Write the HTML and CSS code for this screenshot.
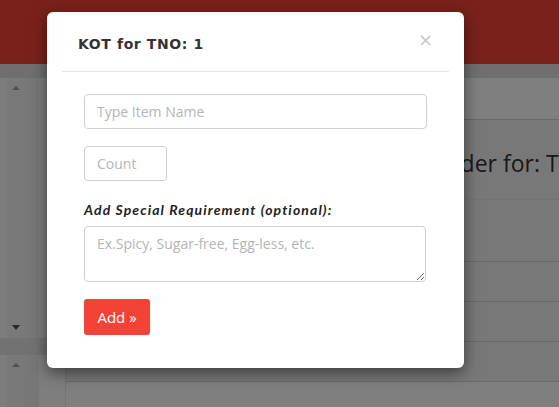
FILE: index.html
```html
<!DOCTYPE html>
<html>
<head>
<meta charset="utf-8">
<link rel="stylesheet" href="styles.css">
</head>
<body>
<div class="page">
  <header class="topbar"></header>
  <div class="subbar"></div>
  <div class="layout">
    <aside class="sidebar">
      <div class="listbox first">
        <div class="edge"></div>
        <div class="scroll"><span class="arr up"></span><span class="arr down"></span></div>
        <div class="pane"></div>
      </div>
      <div class="gapband"></div>
      <div class="listbox second">
        <div class="edge"></div>
        <div class="scroll"><span class="arr up"></span></div>
        <div class="pane"></div>
      </div>
    </aside>
    <main class="main">
      <div class="tabs"></div>
      <h2 class="order-title">Place Order for: TNO 1</h2>
      <div class="row r1"></div>
      <div class="row r2"></div>
      <div class="row r3"></div>
      <div class="row r4"></div>
    </main>
  </div>
</div>
<div class="overlay"></div>
<div class="modal">
  <div class="modal-header">
    <h4 class="modal-title">KOT for TNO: 1</h4>
    <span class="close">&times;</span>
  </div>
  <div class="modal-body">
    <input class="field item" type="text" placeholder="Type Item Name">
    <input class="field count" type="text" placeholder="Count">
    <label class="req-label">Add Special Requirement (optional):</label>
    <textarea class="field notes" placeholder="Ex.Spicy, Sugar-free, Egg-less, etc."></textarea>
    <button class="add-btn">Add &raquo;</button>
  </div>
</div>
</body>
</html>
```
FILE: styles.css
```css
* { box-sizing: border-box; }
html, body { margin: 0; padding: 0; }
body {
  width: 559px;
  height: 407px;
  overflow: hidden;
  font-family: "Open Sans", "Liberation Sans", sans-serif;
  background: #fff;
  position: relative;
}
.page { display: flex; flex-direction: column; height: 407px; overflow: hidden; }
.topbar { height: 64px; background: #f44336; flex: none; }
.subbar { height: 14px; background: #dedede; flex: none; }
.layout { display: flex; flex: 1; min-width: 0; }
.sidebar { width: 66px; flex: none; display: flex; flex-direction: column; border-right: 1px solid #e6e6e6; }
.listbox { display: flex; }
.listbox.first { height: 260px; }
.listbox.second { flex: 1; }
.gapband { height: 17px; background: #e4e4e4; }
.edge { width: 7px; background: #fafafa; }
.scroll { width: 18px; background: #f2f2f2; position: relative; display: flex; flex-direction: column; justify-content: space-between; align-items: center; padding: 8px 0; }
.arr { width: 0; height: 0; border-left: 4px solid transparent; border-right: 4px solid transparent; }
.arr.up { border-bottom: 4px solid #a3a3a3; }
.arr.down { border-top: 5px solid #5a5a5a; }
.pane { width: 15px; background: #eeeeee; }
.sidebar .listbox::after { content: ""; width: 26px; background: #fdfdfd; }
.main { flex: 1; min-width: 0; display: flex; flex-direction: column; overflow: hidden; }
.tabs { height: 42px; border-bottom: 1px solid #d0d0d0; background: #fff; }
.order-title {
  margin: 0;
  height: 80px;
  padding: 27px 0 0 305px;
  font-weight: 400;
  font-size: 23px;
  color: #333;
  white-space: nowrap;
  overflow: hidden;
  background: #f0f0f0;
  border-bottom: 1px solid #e8e8e8;
}
.row { height: 40px; border-bottom: 1px solid #d4d4d4; background: #f0f0f0; }
.row.r1 { height: 62px; background: #f0f0f0; }
.overlay { position: absolute; inset: 0; background: rgba(0,0,0,0.5); }
.modal {
  position: absolute;
  left: 47px;
  top: 12px;
  width: 417px;
  height: 356px;
  background: #fff;
  border-radius: 6px;
  box-shadow: 0 5px 15px rgba(0,0,0,0.5);
}
.modal-header {
  margin: 0 15px;
  height: 60px;
  border-bottom: 1px solid #e5e5e5;
  display: flex;
  align-items: center;
  justify-content: space-between;
  padding: 0 16px 0 16px;
}
.modal-title {
  margin: 0;
  font-family: "DejaVu Sans", sans-serif;
  font-weight: 700;
  font-size: 14px;
  letter-spacing: 0.6px;
  color: #333;
  padding-top: 4px;
}
.close { font-size: 18px; color: #c8c8c8; font-family: "DejaVu Sans", sans-serif; line-height: 1; margin-top: -4px; }
.modal-body { padding: 22px 37px 0; display: flex; flex-direction: column; align-items: flex-start; }
.field {
  display: block;
  border: 1px solid #cfcfcf;
  border-radius: 4px;
  font-family: "Open Sans", sans-serif;
  font-size: 14px;
  color: #555;
  padding: 0 12px;
  background: #fff;
  outline: none;
}
.field::placeholder { color: #b5b5b5; }
.item { width: 343px; height: 35px; }
.count { width: 83px; height: 35px; margin-top: 17px; }
.req-label {
  margin-top: 19px;
  font-family: "Lato", sans-serif;
  font-weight: 700;
  font-style: italic;
  font-size: 14px;
  letter-spacing: 1.1px;
  color: #222;
  line-height: 20px;
}
.notes { width: 342px; height: 56px; margin-top: 6px; padding-top: 7px; resize: vertical; }
.add-btn {
  margin-top: 17px;
  width: 66px;
  height: 36px;
  border: 0;
  border-radius: 3px;
  background: #f44336;
  color: #fff;
  font-family: "Open Sans", sans-serif;
  font-size: 15px;
  padding: 0;
}
```
